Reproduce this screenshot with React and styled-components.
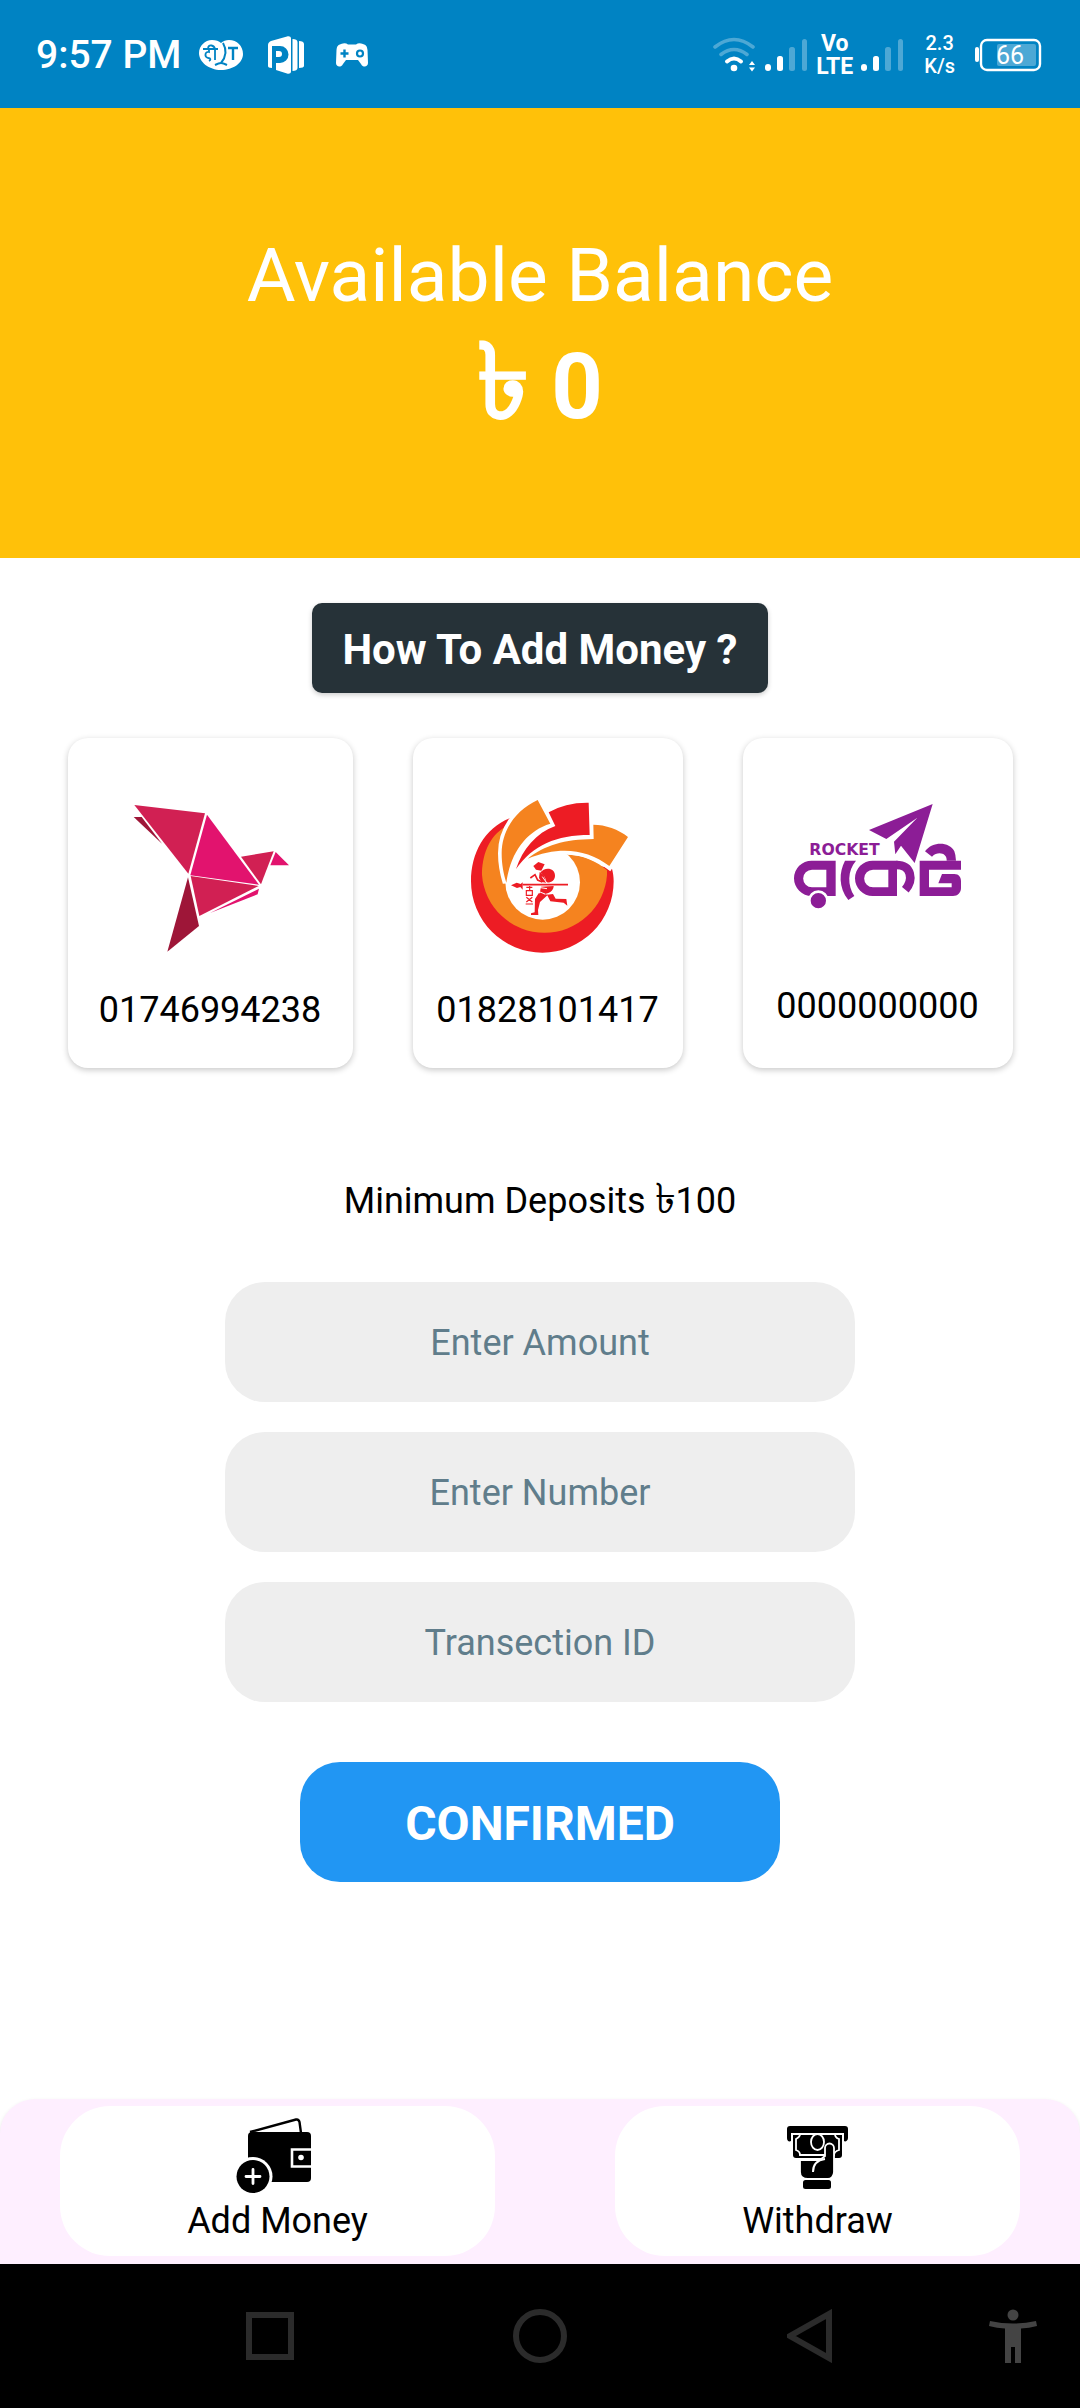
import React from "react";
import styled, { createGlobalStyle } from "styled-components";

const GlobalStyle = createGlobalStyle`
  * { box-sizing: border-box; }
  body { margin: 0; background: #fff; font-family: Roboto, "Noto Sans", sans-serif; color: #000; }
  button, input { font: inherit; border: 0; margin: 0; padding: 0; }
  svg { display: block; flex: none; }
`;

const Screen = styled.div`
  display: flex;
  flex-direction: column;
  min-height: 100vh;
`;

const StatusBar = styled.header`
  display: flex;
  align-items: center;
  justify-content: space-between;
  height: 108px;
  padding: 2px 38px 0 36px;
  background: #0083c3;
  color: #fff;
`;
const StatusGroup = styled.div`
  display: flex;
  align-items: center;
  gap: ${(p) => p.$gap}px;
`;
const Clock = styled.time`
  font-size: 39px;
  line-height: 46px;
  font-weight: 500;
`;
const Stack = styled.div`
  font-size: ${(p) => p.$size}px;
  line-height: 23px;
  font-weight: ${(p) => p.$weight};
  text-align: center;
`;

const Balance = styled.section`
  display: flex;
  flex-direction: column;
  align-items: center;
  justify-content: center;
  gap: 16px;
  height: 450px;
  padding-top: 4px;
  background: #ffc109;
  color: #fff;
`;
const BalanceTitle = styled.h1`
  margin: 0;
  font-size: 75px;
  line-height: 88px;
  font-weight: 400;
`;
const BalanceAmount = styled.p`
  margin: 0;
  font-size: 90px;
  line-height: 105px;
  font-weight: 700;
`;
const Taka = styled.span`
  font-size: ${(p) => p.$size}px;
  line-height: 1px;
`;

const Main = styled.main`
  flex: 1;
  display: flex;
  flex-direction: column;
  align-items: center;
  padding: 45px 60px;
`;
const HelpButton = styled.button`
  height: 90px;
  padding: 2px 30px 0;
  border-radius: 10px;
  background: #263238;
  box-shadow: 0 2px 5px rgba(0, 0, 0, 0.2);
  color: #fff;
  font-size: 42px;
  font-weight: 700;
`;
const Cards = styled.ul`
  display: flex;
  justify-content: center;
  gap: 60px;
  margin: 45px 0 0;
  padding: 0;
  list-style: none;
`;
const Card = styled.li`
  display: flex;
  flex-direction: column;
  align-items: center;
  gap: 23px;
  width: ${(p) => p.$width}px;
  height: 330px;
  padding-top: 48px;
  border-radius: 20px;
  background: #fff;
  box-shadow: 0 2px 6px rgba(0, 0, 0, 0.22);
`;
const Line = styled.span`
  font-size: 36px;
  line-height: 42px;
`;
const Form = styled.form`
  display: flex;
  flex-direction: column;
  align-items: center;
  gap: 30px;
  margin-top: 112px;
  width: 630px;
  max-width: 100%;
`;
const Note = styled.p`
  margin: 0 0 30px;
  font-size: 36px;
  line-height: 42px;
`;
const Field = styled.input`
  width: 100%;
  height: 120px;
  padding-top: 2px;
  border-radius: 40px;
  background: #eee;
  text-align: center;
  font-size: 36px;
  &::placeholder { color: #607d8b; opacity: 1; }
`;
const Confirm = styled.button`
  width: 480px;
  height: 120px;
  margin-top: 30px;
  padding-top: 2px;
  border-radius: 40px;
  background: #2196f3;
  color: #fff;
  font-size: 48px;
  font-weight: 700;
`;

const Tabs = styled.nav`
  display: flex;
  gap: 120px;
  height: 165px;
  padding: 7px 60px 8px;
  border-radius: 35px 35px 0 0;
  background: #feefff;
  box-shadow: 0 2px 4px rgba(0, 0, 0, 0.1);
`;
const Tab = styled.a`
  flex: 1 1 auto;
  display: flex;
  flex-direction: column;
  align-items: center;
  gap: 7px;
  padding-top: 12px;
  border-radius: 50px;
  background: #fff;
  color: #000;
  text-decoration: none;
`;
const SystemNav = styled.footer`
  display: grid;
  grid-template-columns: 1fr 2fr 2fr 2fr 1fr;
  height: 144px;
  background: #000;
`;
const SystemKey = styled.button`
  display: grid;
  place-items: center;
  background: transparent;
  color: ${(p) => p.$color || "#2b2b2b"};
  &:first-child { grid-column: 2; }
`;

const TranslateIcon = () => (
  <svg width="46" height="32" viewBox="0 0 46 32" fill="#fff">
    <path d="M14 1c4 0 7 1 9 3 2-2 5-3 8-3 8 0 14 6 14 14 0 9-10 16-22 16S1 23 1 14C1 7 7 1 14 1z" />
    <path d="M25 4c4 7 3 14-2 20M17 26c2-1 4-2 6-2s4 1 6 2" fill="none" stroke="#0083c3" strokeWidth="2" />
    <path d="M5 10h15M11 10v3c-4-1-5 5-1 6 3 0 3 2 1 3M17 10v11M10 9c1-4 6-3 7 1" fill="none" stroke="#0083c3" strokeWidth="1.800" />
    <path d="M30 9h10M35 9v12" fill="none" stroke="#0083c3" strokeWidth="2.400" />
  </svg>
);
const AppIcon = () => (
  <svg width="44" height="38" viewBox="0 0 44 38" fill="#fff">
    <path d="M0 9c0-2 1-3 3-4L19 .5c2-.5 4 0 4 2v33c0 2-2 2.500-4 2L8 34V24H4v8c-3 0-4-1-4-2z" />
    <path d="M24.500 3c3 0 5 1 5 3v26c0 2-2 3-5 3zM31 5c3 0 5 1 5 3v22c0 1-2 2-5 2z" />
    <path d="M4 10h8a8 8 0 010 17H8v-6h3a3 3 0 000-6H8v9H4z" fill="#0083c3" />
  </svg>
);
const GamepadIcon = () => (
  <svg width="32" height="24" viewBox="0 0 32 24">
    <path d="M5 1C8 0 10 0 12 1.500h8C22 0 24 0 27 1c3 1 4 2 4.500 6L32 20c0 4-5 5-7 1l-3-4H10l-3 4c-2 4-7 3-7-1L.5 7C1 3 2 2 5 1z" fill="#fff" />
    <path d="M4.500 10.500h8M8.500 6.500v8" stroke="#0083c3" strokeWidth="2.400" />
    <circle cx="24" cy="10.500" r="3" fill="none" stroke="#0083c3" strokeWidth="2.200" />
  </svg>
);
const WifiIcon = () => (
  <svg width="44" height="36" viewBox="0 0 44 36" fill="none" stroke="#fff" strokeLinecap="round">
    <path d="M2 10q19-15 38 0M8 17.500q13-10 26 0" strokeWidth="3.600" opacity=".3" />
    <path d="M14 24.500q7-6 14 0" strokeWidth="4" />
    <circle cx="21" cy="31" r="3.300" fill="#fff" stroke="none" />
    <path d="M36 28l3-4 3 4zM36 30.500l3 4 3-4z" fill="#fff" stroke="none" />
  </svg>
);
const SignalIcon = () => (
  <svg width="43" height="34" viewBox="0 0 43 34" fill="#fff">
    <rect x="0" y="26" width="6" height="7" rx="3" />
    <rect x="12" y="18" width="6" height="15" rx="2.500" />
    <g opacity=".3">
      <rect x="24" y="9" width="6" height="24" rx="2.500" />
      <rect x="37" y="1" width="5" height="32" rx="2.500" />
    </g>
  </svg>
);
const BatteryIcon = () => (
  <svg width="67" height="34" viewBox="0 0 67 34">
    <rect x="0" y="9" width="4" height="15" rx="2" fill="#fff" />
    <rect x="6" y="2" width="59" height="30" rx="6" fill="none" stroke="#fff" strokeWidth="2.400" />
    <rect x="22" y="6" width="39" height="22" rx="2" fill="#fff" opacity=".3" />
    <text x="35" y="26" textAnchor="middle" fontSize="25" fill="#fff">66</text>
  </svg>
);

const BirdLogo = () => (
  <svg width="180" height="180" viewBox="208 198 540 540" role="img" aria-label="bKash">
    <path d="M251 255l212 25-50 181z" fill="#d12053" />
    <path d="M249 291h24l61 80z" fill="#9e1638" />
    <path d="M469 284l156 210-206-28z" fill="#e2136e" />
    <path d="M420 468l204 30-178 90z" fill="#d12053" />
    <path d="M412 472l33 146-95 77z" fill="#9e1638" />
    <path d="M571 410l98-16-38 99z" fill="#d12053" />
    <path d="M675 396l40 40h-56z" fill="#e2136e" />
    <path d="M478 579l147-73-4 17z" fill="#e2136e" />
  </svg>
);

const petals = [
  { d: "M410 240C345 270 302 330 302 400c0 35 6 62 14 88 12-90 60-155 132-177z", fill: "#f5831f" },
  { d: "M443 277q50-30 120-29l3 97c-100 0-170 30-221 102 20-60 60-108 118-129z", fill: "#ed1c24" },
  { d: "M577 314c36 0 76 14 104 37l-56 87c-70-52-150-60-245-22 50-40 110-58 198-59z", fill: "#f5831f" },
];
const NagadLogo = () => (
  <svg width="180" height="180" viewBox="171 198 540 540" role="img" aria-label="Nagad">
    <path d="M326 295C250 325 210 400 210 484a214 214 0 00428 0c0-14-2-26-5-38L430 400z" fill="#ed1c24" />
    <path d="M313 320C262 350 243 408 243 465a188 187 0 00375 0v-14C590 425 545 405 503 404l-78-25z" fill="#f5831f" />
    <circle cx="425" cy="487" r="112" fill="#fff" />
    <g fill="#fff" stroke="#fff" strokeWidth="22">
      {petals.map((p) => <path key={p.d} d={p.d} />)}
    </g>
    {petals.map((p) => <path key={p.d} d={p.d} fill={p.fill} />)}
    <g fill="#ed1c24">
      <path d="M397 438l15-12 19 7-10 19-16-3z" />
      <path d="M428 449c18-7 34 2 34 18 0 14-12 22-26 20-2-14-8-22-18-30z" />
      <path d="M416 456l12 8 8 24-14-2-8-12z" />
      <path d="M330 496l17-8 12 4 6-5v22l-7-8-10 3z" />
      <path d="M420 500l38-2c0 14-14 26-42 24z" />
      <path d="M413 520l28 4-24 22-6 24 1 15h-22v-5l11-3 1-40z" />
      <path d="M438 524l18-2 8 14 32 1 3 20-11-9-40-4z" />
    </g>
    <g fill="none" stroke="#ed1c24">
      <path d="M365 494h136" strokeWidth="5" />
      <path d="M388 474l14-10 8 16 14 6" strokeWidth="5" />
      <path d="M376 502h18M376 512h18v14h-18zM376 532l18 14M394 532l-18 14M374 552h22M386 498v16" strokeWidth="3.500" />
    </g>
    <path d="M412 502l26 4M412 514l20 8M424 470l14 20" stroke="#fff" strokeWidth="3" />
  </svg>
);
const RocketLogo = () => (
  <svg width="180" height="176" viewBox="201 198 540 528" role="img" aria-label="Rocket">
    <g fill="#8c1d96" fillRule="evenodd">
      <path d="M635 252l-54 177-41-52-17 26-4-38 70-72-93 64-52-27z" />
      <text x="265" y="405" fontFamily="DejaVu Sans" fontSize="47" fontWeight="700">ROCKET</text>
      <path d="M344 422h-72a53 53 0 000 106h72zM316 449h-43a26 26 0 000 53h43z" />
      <path d="M372 422h33c-26 30-26 75-5 106l-18 12c-30-38-28-84-10-118z" />
      <path d="M530 422h-75a53 53 0 000 106h73v-80zM502 449h-46a26 26 0 000 53h46z" />
      <path d="M596 422h124v27h-96v79h-28z" />
      <path d="M663 462h37c14 0 20 10 20 22v20c0 14-10 24-24 24h-72v-26h68v-12h-40z" />
      <path d="M612 394c24-32 74-28 88 0q4 10 5 28h-28c2-22-26-30-44-12z" />
    </g>
    <path d="M526 435c46 0 52 44 27 74" fill="none" stroke="#8c1d96" strokeWidth="26" />
    <circle cx="292" cy="542" r="27" fill="#8c1d96" stroke="#fff" strokeWidth="8" />
  </svg>
);

const WalletIcon = () => (
  <svg width="92" height="75" viewBox="0 0 92 75">
    <path d="M18 14L64 1.500c2-.4 3 .5 3.500 2.500L69 15" fill="none" stroke="#000" strokeWidth="2.400" />
    <path d="M16 18a4 4 0 014-4h55a4 4 0 014 4v42a4 4 0 01-4 4H16z" />
    <path d="M80 31.500H60v17h20" fill="none" stroke="#fff" strokeWidth="2.600" />
    <circle cx="69" cy="39.500" r="2.800" fill="#fff" />
    <circle cx="21" cy="58.500" r="19.500" fill="#fff" />
    <circle cx="21" cy="58.500" r="16.500" />
    <path d="M14 58.500h14M21 51.500v14" stroke="#fff" strokeWidth="2.800" strokeLinecap="round" />
  </svg>
);
const WithdrawIcon = () => (
  <svg width="84" height="75" viewBox="0 0 84 75">
    <path d="M11 11a3 3 0 013-3h55a3 3 0 013 3v9c0 3-3 4-4 3v-8H15v8c-2 1-4 0-4-3z" />
    <path d="M17 17h49v20a3 3 0 01-3 3H20a3 3 0 01-3-3z" />
    <path d="M24 16c0 3-2 4-4 5v11c3 1 4 3 4 5h34c0-2 2-4 5-5V21c-3-1-4-2-4-5M33 40" fill="none" stroke="#fff" strokeWidth="1.800" />
    <ellipse cx="41.500" cy="24" rx="6.500" ry="8" fill="none" stroke="#fff" strokeWidth="1.800" />
    <path d="M24 42h20l5-4V30a4.500 4.500 0 019 0v24c0 4-3 7-6 7H32c-5 0-8-3-8-7z" stroke="#fff" strokeWidth="1.800" />
    <path d="M37 54c0-9 5-12 12-13" fill="none" stroke="#fff" strokeWidth="2" />
    <rect x="27" y="62" width="28" height="9" rx="2.500" />
  </svg>
);

const wallets = [
  { number: "01746994238", width: 285, Logo: BirdLogo },
  { number: "01828101417", width: 270, Logo: NagadLogo },
  { number: "0000000000", width: 270, Logo: RocketLogo },
];
const fields = ["Enter Amount", "Enter Number", "Transection ID"];

export default function App() {
  return (
    <Screen>
      <GlobalStyle />
      <StatusBar>
        <StatusGroup $gap={24}>
          <StatusGroup $gap={17}>
            <Clock>9:57 PM</Clock>
            <TranslateIcon />
          </StatusGroup>
          <AppIcon />
          <GamepadIcon />
        </StatusGroup>
        <StatusGroup $gap={20}>
          <StatusGroup $gap={8}>
            <WifiIcon />
            <SignalIcon />
            <Stack $size={23} $weight={700}>Vo<br />LTE</Stack>
            <SignalIcon />
          </StatusGroup>
          <Stack $size={20} $weight={500}>2.3<br />K/s</Stack>
          <BatteryIcon />
        </StatusGroup>
      </StatusBar>

      <Balance>
        <BalanceTitle>Available Balance</BalanceTitle>
        <BalanceAmount><Taka $size={105}>৳</Taka> 0</BalanceAmount>
      </Balance>

      <Main>
        <HelpButton type="button">How To Add Money ?</HelpButton>
        <Cards>
          {wallets.map(({ number, width, Logo }) => (
            <Card key={number} $width={width}>
              <Logo />
              <Line>{number}</Line>
            </Card>
          ))}
        </Cards>
        <Form onSubmit={(e) => e.preventDefault()}>
          <Note>Minimum Deposits <Taka $size={42}>৳</Taka>100</Note>
          {fields.map((f) => (
            <Field key={f} type="text" placeholder={f} aria-label={f} />
          ))}
          <Confirm type="submit">CONFIRMED</Confirm>
        </Form>
      </Main>

      <Tabs>
        <Tab href="#add"><WalletIcon /><Line>Add Money</Line></Tab>
        <Tab href="#withdraw"><WithdrawIcon /><Line>Withdraw</Line></Tab>
      </Tabs>
      <SystemNav>
        <SystemKey type="button" aria-label="Recent apps">
          <svg width="48" height="48"><rect x="3" y="3" width="42" height="42" fill="none" stroke="currentColor" strokeWidth="6" /></svg>
        </SystemKey>
        <SystemKey type="button" aria-label="Home">
          <svg width="54" height="54"><circle cx="27" cy="27" r="24" fill="none" stroke="currentColor" strokeWidth="6" /></svg>
        </SystemKey>
        <SystemKey type="button" aria-label="Back">
          <svg width="46" height="54"><path d="M42 5v44L3 27z" fill="none" stroke="currentColor" strokeWidth="6" /></svg>
        </SystemKey>
        <SystemKey type="button" aria-label="Accessibility" $color="#444">
          <svg width="48" height="54" fill="currentColor">
            <circle cx="24" cy="6" r="5.500" />
            <path d="M1 12q23 5 46 0l1 5q-8 2-16 2.500V54h-6V38h-4v16h-6V19.500Q8 19 0 17z" />
          </svg>
        </SystemKey>
      </SystemNav>
    </Screen>
  );
}
